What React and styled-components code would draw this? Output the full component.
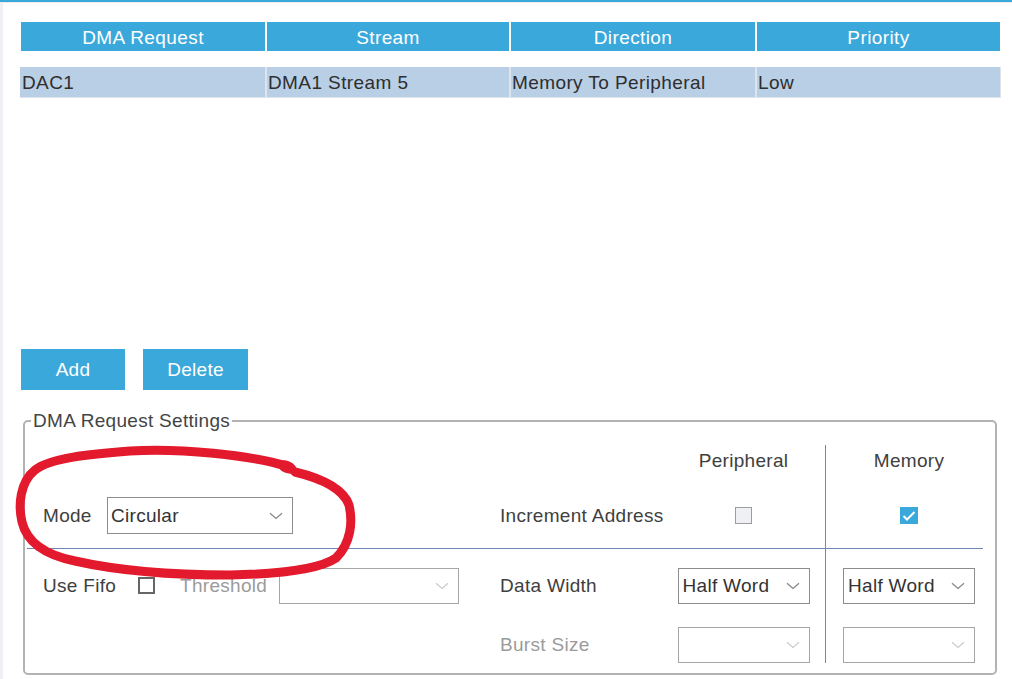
import React from 'react'
import styled, { createGlobalStyle } from 'styled-components'

const BLUE = '#3aa8db'
const LINE = '#6f85b8'

const GlobalStyle = createGlobalStyle`
  html, body {
    margin: 0;
    background: #fff;
  }
  body {
    font-family: "Liberation Sans", Arial, sans-serif;
    font-size: 19px;
    color: #333;
  }
`

const Page = styled.div`
  position: relative;
  width: 1012px;
  height: 679px;
  overflow: hidden;
`

const Frame = styled.div`
  height: 100%;
  box-sizing: border-box;
  border-top: 2px solid ${BLUE};
`

const Inner = styled.div`
  height: 100%;
  box-sizing: border-box;
  border-top: 1px solid #ececf0;
  border-left: 3px solid #eff0f3;
  padding: 19px 0 0 18px;
`

const TableArea = styled.div`
  height: 327px;
  width: 979px;
`

const HeaderRow = styled.div`
  display: grid;
  grid-template-columns: 244px 242px 244px 243px;
  gap: 2px;
  height: 29px;
  margin-bottom: 16px;
`

const HeaderCell = styled.div`
  background: ${BLUE};
  color: #fff;
  display: flex;
  align-items: center;
  justify-content: center;
  padding-top: 2px;
  letter-spacing: 0.4px;
`

const BodyRow = styled.div`
  display: grid;
  grid-template-columns: 245px 242px 244px 243px;
  gap: 2px;
  margin-left: -1px;
  padding: 0 1px 1px 0;
  background: #dde4ec;
  width: fit-content;
`

const BodyCell = styled.div`
  background: #b9cfe5;
  color: #2e2e2e;
  height: 29px;
  display: flex;
  align-items: center;
  padding-left: ${p => (p.$first ? '2px' : '1px')};
  padding-top: 1px;
  letter-spacing: 0.4px;
`

const ButtonBar = styled.div`
  display: flex;
  gap: 18px;
`

const Button = styled.button`
  width: ${p => p.$w}px;
  height: 41px;
  border: none;
  padding: 0;
  background: ${BLUE};
  color: #fff;
  font: inherit;
  letter-spacing: 0.3px;
`

const Fieldset = styled.fieldset`
  box-sizing: border-box;
  width: 974px;
  margin: 20px 0 0 2px;
  padding: 13px 12px 10px 2px;
  border: 2px solid #b3b3b3;
  border-radius: 5px;
  min-inline-size: 0;
`

const Legend = styled.legend`
  margin-left: 4px;
  padding: 0 2px;
  line-height: 22px;
  color: #444;
  letter-spacing: 0.3px;
`

const Grid = styled.div`
  display: grid;
  grid-template-columns: 473px 162px 163px 158px;
  grid-template-rows: 36px 68px 72px 42px;
`

const bands = {
  head: 'padding-bottom: 4px;',
  rule: `border-bottom: 1px solid ${LINE}; padding-top: 2px;`,
  mid: 'padding-top: 1px;',
  foot: 'padding-top: 6px;',
}

const columns = {
  a: 'padding-left: 16px; justify-content: flex-start;',
  b: 'justify-content: flex-start;',
  c: 'justify-content: center;',
  d: `justify-content: center; border-left: 1px solid ${LINE}; padding-left: 9px;`,
}

const Cell = styled.div`
  display: flex;
  align-items: center;
  box-sizing: border-box;
  ${p => columns[p.$col]}
  ${p => bands[p.$band]}
`

const Label = styled.span`
  display: inline-block;
  color: ${p => (p.$muted ? '#9b9b9b' : '#404040')};
  width: ${p => (p.$w ? `${p.$w}px` : 'auto')};
  flex-shrink: 0;
  letter-spacing: 0.3px;
  white-space: nowrap;
`

const Dropdown = styled.div`
  box-sizing: border-box;
  width: ${p => p.$w}px;
  height: ${p => p.$h || 36}px;
  border: 1px solid ${p => (p.$disabled ? '#a6a6a6' : '#8c8c8c')};
  background: #fff;
  display: flex;
  align-items: center;
  justify-content: space-between;
  padding: 0 9px 0 ${p => p.$pl || 3}px;
  color: #333;
  letter-spacing: 0.3px;
  flex-shrink: 0;
`

const Chevron = ({ disabled }) => (
  <svg width="14" height="8" viewBox="0 0 14 8">
    <polyline
      points="1,1.2 7,6.5 13,1.2"
      fill="none"
      stroke={disabled ? '#cbcbcb' : '#858585'}
      strokeWidth="1.2"
    />
  </svg>
)

const checkStates = {
  off: 'background: #fff; border: 2px solid #666;',
  disabled: 'background: #eef0f3; border: 1px solid #9d9d9d;',
  on: `background: ${BLUE}; border: none;`,
}

const Check = styled.span`
  box-sizing: border-box;
  width: ${p => p.$w || 17}px;
  height: 17px;
  display: inline-flex;
  align-items: center;
  justify-content: center;
  flex-shrink: 0;
  ${p => checkStates[p.$state]}
`

const Select = ({ value, w, h, pl, disabled }) => (
  <Dropdown $w={w} $h={h} $pl={pl} $disabled={disabled}>
    <span>{value}</span>
    <Chevron disabled={disabled} />
  </Dropdown>
)

const Annotation = styled.svg`
  position: absolute;
  left: 0;
  top: 0;
  pointer-events: none;
`

const rows = [['DAC1', 'DMA1 Stream 5', 'Memory To Peripheral', 'Low']]

const App = () => (
  <Page>
    <GlobalStyle />
    <Frame>
      <Inner>
        <TableArea>
          <HeaderRow>
            {['DMA Request', 'Stream', 'Direction', 'Priority'].map(h => (
              <HeaderCell key={h}>{h}</HeaderCell>
            ))}
          </HeaderRow>
          {rows.map(r => (
            <BodyRow key={r[0]}>
              {r.map((c, i) => (
                <BodyCell key={i} $first={i === 0}>{c}</BodyCell>
              ))}
            </BodyRow>
          ))}
        </TableArea>

        <ButtonBar>
          <Button $w={104}>Add</Button>
          <Button $w={105}>Delete</Button>
        </ButtonBar>

        <Fieldset>
          <Legend>DMA Request Settings</Legend>
          <Grid>
            <Cell $col="a" $band="head" />
            <Cell $col="b" $band="head" />
            <Cell $col="c" $band="head"><Label>Peripheral</Label></Cell>
            <Cell $col="d" $band="head"><Label>Memory</Label></Cell>

            <Cell $col="a" $band="rule">
              <Label $w={64}>Mode</Label>
              <Select value="Circular" w={186} h={37} />
            </Cell>
            <Cell $col="b" $band="rule"><Label>Increment Address</Label></Cell>
            <Cell $col="c" $band="rule"><Check $state="disabled" /></Cell>
            <Cell $col="d" $band="rule">
              <Check $state="on" $w={18}>
                <svg width="14" height="12" viewBox="0 0 14 12">
                  <polyline points="1.5,6 5,9.5 12.5,2" fill="none" stroke="#fff" strokeWidth="2" />
                </svg>
              </Check>
            </Cell>

            <Cell $col="a" $band="mid">
              <Label $w={95}>Use Fifo</Label>
              <Check $state="off" />
              <Label $muted $w={99} style={{ marginLeft: 25 }}>Threshold</Label>
              <Select value="" w={180} disabled />
            </Cell>
            <Cell $col="b" $band="mid"><Label>Data Width</Label></Cell>
            <Cell $col="c" $band="mid"><Select value="Half Word" w={132} pl={4} /></Cell>
            <Cell $col="d" $band="mid"><Select value="Half Word" w={132} pl={4} /></Cell>

            <Cell $col="a" $band="foot" />
            <Cell $col="b" $band="foot"><Label $muted>Burst Size</Label></Cell>
            <Cell $col="c" $band="foot"><Select value="" w={132} disabled /></Cell>
            <Cell $col="d" $band="foot"><Select value="" w={132} disabled /></Cell>
          </Grid>
        </Fieldset>
      </Inner>
    </Frame>

    <Annotation width="1012" height="679" viewBox="0 0 1012 679">
      <path
        d="M 286 466 C 250 455, 180 448, 130 451 C 90 454, 50 458, 35 470 C 20 482, 18 505, 22 522 C 27 543, 45 555, 75 561 C 115 570, 170 575, 230 575 C 280 574, 320 569, 336 558 C 351 543, 353 522, 349 505 C 343 488, 320 478, 295 472"
        fill="none"
        stroke="#e3192d"
        strokeWidth="9"
        strokeLinecap="round"
        strokeLinejoin="round"
      />
      <ellipse cx="287" cy="467" rx="10" ry="6" transform="rotate(22 287 467)" fill="#e3192d" />
    </Annotation>
  </Page>
)

export default App
